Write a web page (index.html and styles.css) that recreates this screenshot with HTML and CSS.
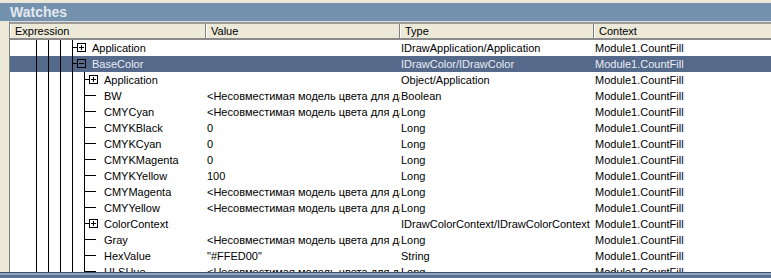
FILE: index.html
```html
<!DOCTYPE html>
<html lang="en">
<head>
  <meta charset="UTF-8">
  <title>Watches</title>
  <link rel="stylesheet" href="styles.css">
</head>
<body>
  <div class="panel">
    <div class="title">Watches</div>
    <div class="frame">
      <div class="header">
        <div class="hcell col-expr">Expression</div>
        <div class="hcell col-val">Value</div>
        <div class="hcell col-type">Type</div>
        <div class="hcell col-ctx">Context</div>
      </div>
      <div class="list">
        <div class="row">
          <div class="cell col-expr"><span class="lead"></span><span class="indent"></span><span class="indent"></span><span class="indent"></span><span class="node"><span class="box plus"></span></span>Application</div>
          <div class="cell col-val"></div>
          <div class="cell col-type">IDrawApplication/Application</div>
          <div class="cell col-ctx">Module1.CountFill</div>
        </div>
        <div class="row selected">
          <div class="cell col-expr"><span class="lead"></span><span class="indent"></span><span class="indent"></span><span class="indent"></span><span class="node"><span class="box"></span></span>BaseColor</div>
          <div class="cell col-val"></div>
          <div class="cell col-type">IDrawColor/IDrawColor</div>
          <div class="cell col-ctx">Module1.CountFill</div>
        </div>
        <div class="row">
          <div class="cell col-expr"><span class="lead"></span><span class="indent"></span><span class="indent"></span><span class="indent"></span><span class="indent"></span><span class="node"><span class="box plus"></span></span>Application</div>
          <div class="cell col-val"></div>
          <div class="cell col-type">Object/Application</div>
          <div class="cell col-ctx">Module1.CountFill</div>
        </div>
        <div class="row">
          <div class="cell col-expr"><span class="lead"></span><span class="indent"></span><span class="indent"></span><span class="indent"></span><span class="indent"></span><span class="node leaf"></span>BW</div>
          <div class="cell col-val">&lt;Несовместимая модель цвета для данного свойства&gt;</div>
          <div class="cell col-type">Boolean</div>
          <div class="cell col-ctx">Module1.CountFill</div>
        </div>
        <div class="row">
          <div class="cell col-expr"><span class="lead"></span><span class="indent"></span><span class="indent"></span><span class="indent"></span><span class="indent"></span><span class="node leaf"></span>CMYCyan</div>
          <div class="cell col-val">&lt;Несовместимая модель цвета для данного свойства&gt;</div>
          <div class="cell col-type">Long</div>
          <div class="cell col-ctx">Module1.CountFill</div>
        </div>
        <div class="row">
          <div class="cell col-expr"><span class="lead"></span><span class="indent"></span><span class="indent"></span><span class="indent"></span><span class="indent"></span><span class="node leaf"></span>CMYKBlack</div>
          <div class="cell col-val">0</div>
          <div class="cell col-type">Long</div>
          <div class="cell col-ctx">Module1.CountFill</div>
        </div>
        <div class="row">
          <div class="cell col-expr"><span class="lead"></span><span class="indent"></span><span class="indent"></span><span class="indent"></span><span class="indent"></span><span class="node leaf"></span>CMYKCyan</div>
          <div class="cell col-val">0</div>
          <div class="cell col-type">Long</div>
          <div class="cell col-ctx">Module1.CountFill</div>
        </div>
        <div class="row">
          <div class="cell col-expr"><span class="lead"></span><span class="indent"></span><span class="indent"></span><span class="indent"></span><span class="indent"></span><span class="node leaf"></span>CMYKMagenta</div>
          <div class="cell col-val">0</div>
          <div class="cell col-type">Long</div>
          <div class="cell col-ctx">Module1.CountFill</div>
        </div>
        <div class="row">
          <div class="cell col-expr"><span class="lead"></span><span class="indent"></span><span class="indent"></span><span class="indent"></span><span class="indent"></span><span class="node leaf"></span>CMYKYellow</div>
          <div class="cell col-val">100</div>
          <div class="cell col-type">Long</div>
          <div class="cell col-ctx">Module1.CountFill</div>
        </div>
        <div class="row">
          <div class="cell col-expr"><span class="lead"></span><span class="indent"></span><span class="indent"></span><span class="indent"></span><span class="indent"></span><span class="node leaf"></span>CMYMagenta</div>
          <div class="cell col-val">&lt;Несовместимая модель цвета для данного свойства&gt;</div>
          <div class="cell col-type">Long</div>
          <div class="cell col-ctx">Module1.CountFill</div>
        </div>
        <div class="row">
          <div class="cell col-expr"><span class="lead"></span><span class="indent"></span><span class="indent"></span><span class="indent"></span><span class="indent"></span><span class="node leaf"></span>CMYYellow</div>
          <div class="cell col-val">&lt;Несовместимая модель цвета для данного свойства&gt;</div>
          <div class="cell col-type">Long</div>
          <div class="cell col-ctx">Module1.CountFill</div>
        </div>
        <div class="row">
          <div class="cell col-expr"><span class="lead"></span><span class="indent"></span><span class="indent"></span><span class="indent"></span><span class="indent"></span><span class="node"><span class="box plus"></span></span>ColorContext</div>
          <div class="cell col-val"></div>
          <div class="cell col-type">IDrawColorContext/IDrawColorContext</div>
          <div class="cell col-ctx">Module1.CountFill</div>
        </div>
        <div class="row">
          <div class="cell col-expr"><span class="lead"></span><span class="indent"></span><span class="indent"></span><span class="indent"></span><span class="indent"></span><span class="node leaf"></span>Gray</div>
          <div class="cell col-val">&lt;Несовместимая модель цвета для данного свойства&gt;</div>
          <div class="cell col-type">Long</div>
          <div class="cell col-ctx">Module1.CountFill</div>
        </div>
        <div class="row">
          <div class="cell col-expr"><span class="lead"></span><span class="indent"></span><span class="indent"></span><span class="indent"></span><span class="indent"></span><span class="node leaf"></span>HexValue</div>
          <div class="cell col-val">"#FFED00"</div>
          <div class="cell col-type">String</div>
          <div class="cell col-ctx">Module1.CountFill</div>
        </div>
        <div class="row">
          <div class="cell col-expr"><span class="lead"></span><span class="indent"></span><span class="indent"></span><span class="indent"></span><span class="indent"></span><span class="node leaf"></span>HLSHue</div>
          <div class="cell col-val">&lt;Несовместимая модель цвета для данного свойства&gt;</div>
          <div class="cell col-type">Long</div>
          <div class="cell col-ctx">Module1.CountFill</div>
        </div>
      </div>
    </div>
    <div class="statusbar"></div>
  </div>
</body>
</html>
```

FILE: styles.css
```css
body {
    margin: 0;
    font-family: 'Liberation Sans', Arial, sans-serif;
    font-size: 11px;
    color: #000;
    background: #ece9d8;
}
.panel {
    width: 771px;
    height: 278px;
    overflow: hidden;
    padding-top: 3px;
    box-sizing: border-box;
    background: #ece9d8;
}
.title {
    height: 18px;
    line-height: 18px;
    padding-left: 10px;
    background: #7491ad;
    color: #e3e9ef;
    font-size: 14px;
    font-weight: bold;
}
.frame {
    margin-left: 9px;
    border-top: 1px solid #dcdcdc;
    border-left: 1px solid #808080;
}
.header {
    display: flex;
    height: 14px;
    border-top: 2px solid #9a9a9a;
    border-bottom: 2px solid #8a8a8a;
    background: #ece9d8;
    white-space: nowrap;
}
.hcell {
    flex-shrink: 0;
    box-sizing: border-box;
    line-height: 14px;
    padding-left: 4px;
    border-left: 1px solid #fff;
    border-right: 1px solid #808080;
}
.col-expr { width: 196px; }
.col-val { width: 194px; }
.col-type { width: 194px; }
.col-ctx { width: 178px; }
.list {
    height: 232px;
    overflow: hidden;
    background: #fff;
}
.row {
    display: flex;
    height: 16px;
    line-height: 16px;
    white-space: nowrap;
}
.row.selected {
    background: #55698b;
    color: #e8edf3;
}
.cell {
    flex-shrink: 0;
    display: flex;
    overflow: hidden;
    box-sizing: border-box;
}
.cell.col-val,
.cell.col-type,
.cell.col-ctx {
    display: block;
    padding-left: 1px;
}
.lead {
    width: 26px;
    flex-shrink: 0;
}
.indent {
    width: 12px;
    flex-shrink: 0;
    background: linear-gradient(#000, #000) 0 0 / 1px 100% no-repeat;
}
.node {
    width: 20px;
    flex-shrink: 0;
    background-image: linear-gradient(#000, #000), linear-gradient(#000, #000);
    background-size: 1px 100%, 5px 1px;
    background-position: 0 0, 0 7px;
    background-repeat: no-repeat;
}
.node.leaf {
    background-size: 1px 100%, 12px 1px;
}
.box {
    display: block;
    width: 9px;
    height: 9px;
    margin: 3px 0 0 5px;
    box-sizing: border-box;
    border: 1px solid #000;
    background: linear-gradient(#000, #000) center / 5px 1px no-repeat;
}
.box.plus {
    background-image: linear-gradient(#000, #000), linear-gradient(#000, #000);
    background-size: 5px 1px, 1px 5px;
    background-position: center, center;
    background-repeat: no-repeat;
}
.statusbar {
    height: 6px;
    background: linear-gradient(#3f4f69 0, #3f4f69 1px, #8ea4c0 1px, #8ea4c0 3px, #5a7092 3px);
}
```
